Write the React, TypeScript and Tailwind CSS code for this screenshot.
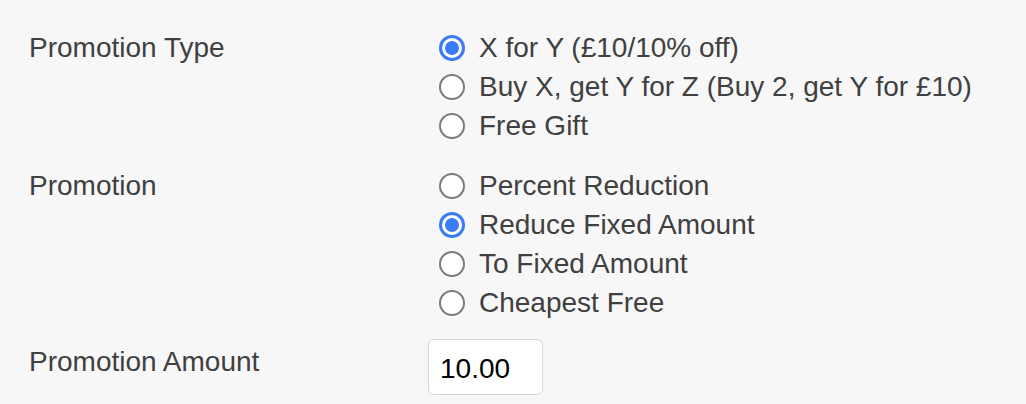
import React from "react";

function Radio({ checked, label }: { checked?: boolean; label: string }) {
  return (
    <div className="flex h-[39px] items-center">
      {checked ? (
        <span className="flex h-[26px] w-[26px] items-center justify-center rounded-full bg-[#3b7cf6]">
          <span className="h-[20px] w-[20px] rounded-full border-[3px] border-white bg-[#3b7cf6]" />
        </span>
      ) : (
        <span className="h-[26px] w-[26px] rounded-full border-2 border-[#7b7b7b] bg-white" />
      )}
      <span className="ml-[14px] whitespace-nowrap">{label}</span>
    </div>
  );
}

export default function App() {
  return (
    <div
      className="h-[404px] w-full bg-[#f7f7f7] pl-[29px] pt-[28px] text-[28px] text-[#404040]"
      style={{ fontFamily: '"Liberation Sans", Arial, Helvetica, sans-serif' }}
    >
      <div className="grid grid-cols-[399px_1fr]">
        <div className="flex h-[39px] items-center">Promotion Type</div>
        <div className="pl-[11px]">
          <Radio checked label="X for Y (£10/10% off)" />
          <Radio label="Buy X, get Y for Z (Buy 2, get Y for £10)" />
          <Radio label="Free Gift" />
        </div>
      </div>
      <div className="mt-[21px] grid grid-cols-[399px_1fr]">
        <div className="flex h-[39px] items-center">Promotion</div>
        <div className="pl-[11px]">
          <Radio label="Percent Reduction" />
          <Radio checked label="Reduce Fixed Amount" />
          <Radio label="To Fixed Amount" />
          <Radio label="Cheapest Free" />
        </div>
      </div>
      <div className="mt-[17px] grid grid-cols-[399px_1fr] items-start">
        <div className="mt-[3px] flex h-[39px] items-center">Promotion Amount</div>
        <div>
          <div className="flex h-[56px] w-[115px] items-center rounded-[6px] border border-[#d6d6d6] bg-white pl-[11px] pt-[3px] text-black">
            10.00
          </div>
        </div>
      </div>
    </div>
  );
}
